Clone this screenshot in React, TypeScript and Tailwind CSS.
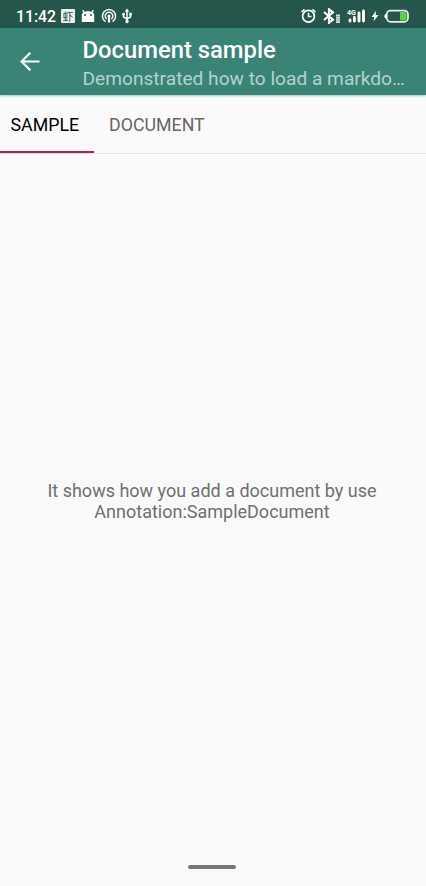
import type { ReactNode } from "react";

function Icon({ w, h = 16, className = "", children }: { w: number; h?: number; className?: string; children: ReactNode }) {
  return (
    <svg width={w} height={h} viewBox={`0 0 ${w} ${h}`} fill="none" className={`block shrink-0 ${className}`}>
      {children}
    </svg>
  );
}

function StatusBar() {
  return (
    <header className="flex h-7 items-center bg-[#24564b] pt-1 pl-4 text-white">
      <span className="w-[45px] pt-px text-[15.8px] leading-4 font-medium whitespace-nowrap">11:42</span>
      <span className="flex h-[14px] w-[14px] shrink-0 items-center justify-center rounded-[1px] bg-[#eaf0ee] font-['Noto_Sans_CJK_SC',sans-serif] text-[11px] leading-[12px] text-[#24564b]">虾</span>
      <Icon w={14} className="ml-[6px]">
        <path d="M.8 6.500h12.400V14H.8z" fill="#fff" />
        <path d="M.8 7.500C.8 4.500 3.200 3.300 7 3.300s6.200 1.200 6.200 4.200z" fill="#fff" />
        <path d="m1.700 2 1.700 3M12.300 2l-1.700 3" stroke="#fff" strokeWidth="1.300" />
        <circle cx="4" cy="7" r="1" fill="#24564b" />
        <circle cx="10" cy="7" r="1" fill="#24564b" />
      </Icon>
      <Icon w={16} className="ml-[6px]">
        <path d="M4.500 13.700a6.600 6.600 0 1 1 7 0M5.700 11a3.800 3.800 0 1 1 4.600 0" stroke="#f1f5f4" strokeWidth="1.500" />
        <circle cx="8" cy="8" r="1.600" fill="#fff" />
        <path d="M8 8v6.500" stroke="#fff" strokeWidth="2.200" />
      </Icon>
      <Icon w={10} className="ml-[5px]">
        <path d="M5 2.500v11M1.500 6v3L5 11l3.500-2V6" stroke="#fff" strokeWidth="1.500" />
        <path d="m5 .6 2.200 3.200H2.800zM7.200 4.800h2.600v2.600H7.200z" fill="#fff" />
        <circle cx="1.600" cy="6.200" r="1.400" fill="#fff" />
        <circle cx="5" cy="13.500" r="1.700" fill="#fff" />
      </Icon>
      <div className="ml-[169px] flex items-center">
        <Icon w={15}>
          <circle cx="7.500" cy="8.200" r="5.900" stroke="#fff" strokeWidth="1.700" />
          <path d="M7.500 4.800v3.800h3M.5 4.100l3-2.700M14.500 4.100l-3-2.700" stroke="#fff" strokeWidth="1.500" />
        </Icon>
        <Icon w={19} className="ml-[6px]">
          <path d="m2 4 9 7.700-4 3V1.300l4 3L2 12" stroke="#fff" strokeWidth="2.100" />
          <path d="M14 6.500h4V15h-4z" fill="#d3dfdc" />
          <path d="M14 8.500h4M14 10.700h4M14 12.900h4" stroke="#52776e" strokeWidth=".5" />
        </Icon>
        <Icon w={20} className="ml-[6px]">
          <path d="M3 12v1M7.400 9.500V13M12 5v8M16.500 3v10" stroke="#fff" strokeWidth="2.900" strokeLinecap="round" />
          <text x="0" y="7" fill="#fff" fontSize="7" fontWeight="700" fontFamily="Roboto">4G</text>
        </Icon>
        <Icon w={8} className="ml-[4px]">
          <path d="M5 3 .5 9h2.800l-.8 4.500L7.500 7H4.700z" fill="#fff" />
        </Icon>
        <Icon w={26} className="ml-[5px]">
          <rect x="2.800" y="2.600" width="21.200" height="11.200" rx="3.700" stroke="#e8f0ed" strokeWidth="1.700" />
          <path d="M2.500 6Q.8 6 .8 8.200t1.700 2.200" fill="#fff" stroke="#fff" />
          <path d="M16 4h4.500Q22.700 4 22.700 6.500v3.400q0 2.500-2.200 2.500H16z" fill="#62cf3c" />
        </Icon>
      </div>
    </header>
  );
}

function Toolbar() {
  return (
    <div className="flex h-[67px] bg-[#398477] shadow-[0_1px_2px_rgba(0,0,0,0.25)]">
      <button aria-label="Back" className="mt-[23px] ml-5 h-[20px] w-[20px] shrink-0">
        <Icon w={20} h={20}>
          <path d="M19.500 10.500H2M10.300 1.800 1.600 10.500l8.700 8.700" stroke="#fff" strokeWidth="2.200" />
        </Icon>
      </button>
      <div className="ml-[42.5px] w-[336px] pt-2">
        <h1 className="text-[23.8px] leading-[28px] font-medium text-white">Document sample</h1>
        <p className="text-[19.15px] leading-[30px] whitespace-nowrap text-[#b5d2cd]">Demonstrated how to load a markdo…</p>
      </div>
    </div>
  );
}

export default function App() {
  return (
    <div className="flex h-[886px] w-[426px] flex-col overflow-hidden bg-[#fafafa] font-[Roboto,sans-serif]">
      <StatusBar />
      <Toolbar />
      <nav className="flex h-[59px] shrink-0 border-b border-[#e5e5e5] text-[17.8px]">
        <button className="h-[58px] w-[94px] border-b-2 border-[#b81f45] pt-[4px] pl-[10.5px] text-left text-black">SAMPLE</button>
        <button className="h-[58px] pt-[2px] pl-[15px] text-left text-[#666]">DOCUMENT</button>
      </nav>
      <main className="flex-1 pt-[326px] pr-[2px] text-center text-[18px] leading-[21px] text-[#707070]">
        It shows how you add a document by use<br />Annotation:SampleDocument
      </main>
      <footer className="flex h-[21px] shrink-0 justify-center pr-[2px]">
        <span className="h-[4px] w-[48px] rounded-full bg-[#777]" />
      </footer>
    </div>
  );
}
